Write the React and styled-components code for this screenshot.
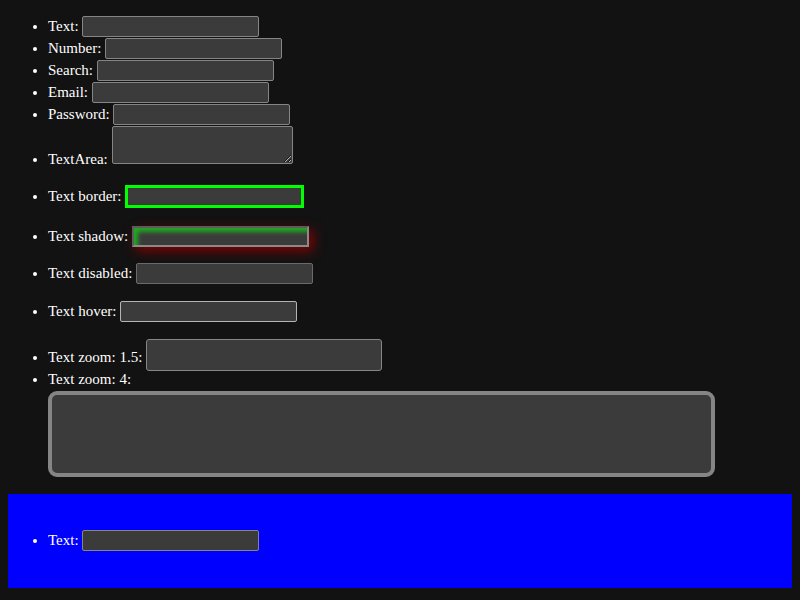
import React from 'react';
import styled, { createGlobalStyle, css } from 'styled-components';

const Global = createGlobalStyle`
  html {
    color-scheme: dark;
    background: #121212;
  }
  body {
    margin: 8px;
    background: #121212;
    color: #ffffff;
    font-family: "Liberation Serif", "Times New Roman", serif;
    font-size: 15px;
  }
`;

const List = styled.ul`
  margin: ${(p) => (p.$first ? '8px 0 17px' : '16px 0')};
  padding-left: 40px;
  list-style: disc;
`;

const Item = styled.li`
  min-height: 22px;
  margin: ${(p) => p.$space || '0'};
`;

const fieldBase = css`
  appearance: none;
  box-sizing: border-box;
  width: 177px;
  height: 21px;
  margin: 0;
  padding: 1px 2px;
  border: 1px solid #858585;
  border-radius: 2px;
  background: #3b3b3b;
  color: #ffffff;
  font-family: "Liberation Sans", Arial, sans-serif;
  font-size: 13.333px;
  vertical-align: baseline;
  outline: none;
`;

const variants = {
  border: css`
    width: 179px;
    height: 23px;
    border: 3px solid #00ff00;
    border-radius: 0;
  `,
  shadow: css`
    border: 2px solid #8a8a8a;
    border-top-color: #5c5c5c;
    border-left-color: #5c5c5c;
    border-radius: 0;
    box-shadow: inset 4px 4px 4px #22a822, 4px 4px 12px rgba(150, 0, 0, 0.85);
  `,
  disabled: css`
    border-color: #6a6a6a;
  `,
  hover: css`
    border-color: #b4b4b4;
  `,
  zoom15: css`
    width: 236px;
    height: 32px;
    border-width: 1.5px;
    border-radius: 3px;
    font-size: 20px;
  `,
  zoom4: css`
    display: block;
    margin-top: 3px;
    width: 667px;
    height: 86px;
    border-width: 4px;
    border-radius: 9px;
    font-size: 53px;
  `,
};

const Field = styled.input`
  ${fieldBase}
  ${(p) => p.$variant && variants[p.$variant]}
`;

const Area = styled.textarea`
  ${fieldBase}
  width: 181px;
  height: 38px;
  resize: both;
`;

const BlueBox = styled.div`
  background: #0000ff;
  padding: 20px 0;
`;

export default function App() {
  return (
    <>
      <Global />
      <List $first>
        <Item>Text: <Field type="text" /></Item>
        <Item>Number: <Field type="number" /></Item>
        <Item>Search: <Field type="search" /></Item>
        <Item>Email: <Field type="email" /></Item>
        <Item>Password: <Field type="password" /></Item>
        <Item>TextArea: <Area /></Item>
        <Item $space="17px 0 18px">Text border: <Field type="text" $variant="border" /></Item>
        <Item $space="16px 0 15px">Text shadow: <Field type="text" $variant="shadow" /></Item>
        <Item $space="15px 0 16px">Text disabled: <Field type="text" disabled $variant="disabled" /></Item>
        <Item $space="16px 0">Text hover: <Field type="text" $variant="hover" /></Item>
        <Item>Text zoom: 1.5: <Field type="text" $variant="zoom15" /></Item>
        <Item>Text zoom: 4: <Field type="text" $variant="zoom4" /></Item>
      </List>
      <BlueBox>
        <List>
          <Item>Text: <Field type="text" /></Item>
        </List>
      </BlueBox>
    </>
  );
}
